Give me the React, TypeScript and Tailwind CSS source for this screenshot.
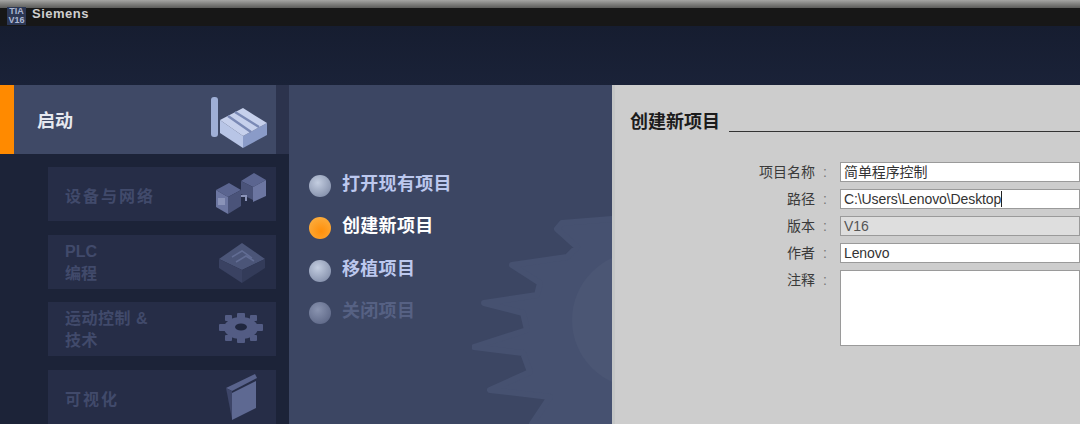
const CJK = '"Liberation Sans", "Noto Sans CJK SC", sans-serif';

function FactoryIcon() {
  return (
    <svg width="60" height="54" viewBox="0 0 60 54" className="shrink-0">
      <rect x="1" y="1" width="7" height="40" rx="3" fill="#9fafd6" />
      <path d="M10 24 L33 40 V52 L10 37 Z" fill="#b8c5e6" />
      <path d="M33 40 L57 27 V39 L33 52 Z" fill="#8a9bc8" />
      <path d="M10 24 L33 12 L57 27 L33 40 Z" fill="#c6d0ec" />
      <path d="M18 20 L41 36 M25 16 L49 31" stroke="#7a89b5" strokeWidth="2.5" />
    </svg>
  );
}

function DevicesIcon() {
  return (
    <svg width="54" height="44" viewBox="0 0 54 44" className="shrink-0">
      <path d="M2 18 L15 11 L27 18 L14 25 Z" fill="#5b6590" />
      <path d="M2 18 L14 25 V42 L2 35 Z" fill="#6c76a1" />
      <path d="M14 25 L27 18 V34 L14 42 Z" fill="#4a5379" />
      <rect x="4" y="26" width="7" height="7" fill="#8a93b8" />
      <path d="M27 9 L40 1 L52 8 L39 15 Z" fill="#5b6590" />
      <path d="M27 9 L39 15 V28 L27 22 Z" fill="#4a5379" />
      <path d="M39 15 L52 8 V24 L39 30 Z" fill="#6c76a1" />
      <path d="M27 24 L32 24 V29" stroke="#8a93b8" strokeWidth="2" fill="none" />
    </svg>
  );
}

function PlcIcon() {
  return (
    <svg width="48" height="42" viewBox="0 0 48 42" className="shrink-0">
      <path d="M1 17 L24 1 L47 17 L24 28 Z" fill="#4b5578" />
      <path d="M1 17 L24 28 V41 L1 26 Z" fill="#3a4262" />
      <path d="M24 28 L47 17 V26 L24 41 Z" fill="#333b59" />
      <path d="M14 15 L24 9 L34 16 M18 20 L28 14 L36 19" stroke="#626d94" strokeWidth="1.5" fill="none" />
    </svg>
  );
}

function GearIcon() {
  return (
    <svg width="44" height="32" viewBox="0 0 44 32" className="shrink-0">
      <g fill="#535c84">
        <ellipse cx="22" cy="15" rx="17" ry="11" />
        <rect x="18" y="0" width="8" height="6" rx="1" />
        <rect x="18" y="24" width="8" height="6" rx="1" />
        <rect x="0" y="11" width="7" height="7" rx="1" />
        <rect x="37" y="11" width="7" height="7" rx="1" />
        <rect x="6" y="2" width="7" height="6" rx="1" />
        <rect x="31" y="2" width="7" height="6" rx="1" />
        <rect x="6" y="22" width="7" height="6" rx="1" />
        <rect x="31" y="22" width="7" height="6" rx="1" />
      </g>
      <ellipse cx="22" cy="14" rx="6" ry="3.5" fill="#20273f" />
    </svg>
  );
}

function PanelIcon() {
  return (
    <svg width="34" height="48" viewBox="0 0 34 48" className="shrink-0">
      <path d="M1 15 L30 1 L32 5 L7 18 Z" fill="#59638c" />
      <path d="M1 15 L7 18 V46 L7 46 Z" fill="#3d4568" />
      <path d="M7 20 L31 8 V35 L7 47 Z" fill="#5e6992" />
    </svg>
  );
}

function Tile({ children, icon, iconClass, textClass }: { children: React.ReactNode; icon: React.ReactNode; iconClass: string; textClass?: string }) {
  return (
    <div className="flex h-[54px] shrink-0 items-center justify-between bg-[#262d47] pl-[17px]">
      <div className={`text-[16px] leading-[22px] font-bold text-[#414a6b] ${textClass ?? ""}`}>{children}</div>
      <div className={iconClass}>{icon}</div>
    </div>
  );
}

function MenuItem({ label, dot, text }: { label: string; dot: string; text: string }) {
  return (
    <div className="flex h-[22px] items-center gap-[11px]">
      <span className={`mt-[3px] h-[22px] w-[22px] rounded-full ${dot}`} />
      <span className={`text-[18px] font-bold tracking-[0.3px] ${text}`}>{label}</span>
    </div>
  );
}

function Field({ label, children, className }: { label: string; children?: React.ReactNode; className: string }) {
  return (
    <div className="flex items-start">
      <div className="w-[197px] shrink-0 text-right text-[14px] leading-[20px] text-[#3a3a3a]">
        {label}
        <span className="ml-[8px] text-[#777]">:</span>
      </div>
      <div className={`ml-[13px] flex-1 border border-[#9a9a9a] px-[3px] text-[14px] tracking-[-0.1px] text-[#333] ${className}`}>{children}</div>
    </div>
  );
}

export default function App() {
  return (
    <div className="flex h-[424px] w-[1080px] flex-col overflow-hidden bg-[#1b233a]" style={{ fontFamily: CJK }}>
      <div className="flex h-[26px] shrink-0 flex-col">
        <div className="h-[8px] bg-gradient-to-b from-[#a5a5a3] to-[#5c5c5a]" />
        <div className="flex h-[18px] items-start bg-[#171717]">
          <div className="ml-[7px] -mt-[1px] flex h-[18px] w-[19px] flex-col items-center bg-[#2c3754] text-[9px] leading-[9px] font-bold text-[#aab6d2]">
            <span>TIA</span>
            <span>V16</span>
          </div>
          <span className="ml-[6px] -mt-[1px] text-[13px] leading-[14px] font-bold tracking-[0.5px] text-[#cfcfcf]">Siemens</span>
        </div>
      </div>
      <div className="h-[59px] shrink-0 bg-gradient-to-b from-[#161d30] to-[#1a2238]" />
      <div className="flex min-h-0 flex-1">
        <div className="flex w-[289px] shrink-0 flex-col">
          <div className="flex h-[69px] shrink-0 bg-[#2c334d]">
            <div className="w-[14px] bg-[#ff8a00]" />
            <div className="flex w-[262px] items-center justify-between bg-[#3f4966] pl-[23px]">
              <span className="pt-[4px] text-[18px] font-bold text-[#e6e8ef]">启动</span>
              <div className="mr-[6px] mt-[6px]">
                <FactoryIcon />
              </div>
            </div>
          </div>
          <div className="flex min-h-0 flex-1 flex-col gap-[13.5px] bg-[#1c2338] pt-[13px] pr-[13px] pl-[48px]">
            <Tile icon={<DevicesIcon />} iconClass="mr-[8px]" textClass="pt-[6px] tracking-[2px]">
              设备与网络
            </Tile>
            <Tile icon={<PlcIcon />} iconClass="mr-[10px] mt-[2px]" textClass="pt-[2px] leading-[21px]">
              PLC
              <br />
              编程
            </Tile>
            <Tile icon={<GearIcon />} iconClass="mr-[13px]" textClass="pt-[2px] tracking-[0.5px]">
              运动控制 &amp;
              <br />
              技术
            </Tile>
            <Tile icon={<PanelIcon />} iconClass="mr-[17px]" textClass="pt-[6px] tracking-[2px]">
              可视化
            </Tile>
          </div>
        </div>
        <div className="relative flex w-[323px] shrink-0 flex-col overflow-hidden bg-[#3c4663] pt-[88px] pl-[20px]">
          <svg width="150" height="270" viewBox="0 0 150 270" className="absolute top-[72px] left-[183px]">
            <path
              d="M140 62 L90 66 L85 72 L105 90 L95 100 L40 108 L68 126 L65 138 L12 146 L51 156 L55 173 L2 190 L51 196 L58 215 L18 233 L78 240 L60 267 L150 267 L150 62 Z"
              fill="#465170"
              stroke="#465170"
              strokeWidth="6"
              strokeLinejoin="round"
            />
            <circle cx="168" cy="163" r="68" fill="#4b5674" />
          </svg>
          <div className="relative flex flex-col gap-[20.5px]">
            <MenuItem label="打开现有项目" dot="bg-[radial-gradient(circle_at_40%_35%,#c3cde0,#76829f)]" text="text-[#bcc8ee]" />
            <MenuItem label="创建新项目" dot="bg-[radial-gradient(circle_at_55%_65%,#ff8f0a,#fbb44a)]" text="text-white" />
            <MenuItem label="移植项目" dot="bg-[radial-gradient(circle_at_40%_35%,#c3cde0,#76829f)]" text="text-[#bcc8ee]" />
            <MenuItem label="关闭项目" dot="bg-[radial-gradient(circle_at_40%_35%,#8a94b0,#545e7e)]" text="text-[#566183]" />
          </div>
        </div>
        <div className="min-w-0 flex-1 border-l-[3px] border-[#c4c6c6] bg-[#cdcdcd] pt-[25px] pl-[15px]">
          <div className="flex items-end">
            <span className="text-[18px] leading-[24px] font-bold text-[#1c1c1c]">创建新项目</span>
            <div className="mb-[2px] ml-[9px] h-[1px] flex-1 bg-[#333]" />
          </div>
          <div className="mt-[28px] flex flex-col gap-[7px]">
            <Field label="项目名称" className="h-[20px] bg-white leading-[18px]">
              简单程序控制
            </Field>
            <Field label="路径" className="h-[20px] bg-white leading-[18px]">
              C:\Users\Lenovo\Desktop
              <span className="border-l border-[#222]" />
            </Field>
            <Field label="版本" className="h-[20px] bg-[#dedede] leading-[18px] text-[#555]">
              V16
            </Field>
            <Field label="作者" className="h-[20px] bg-white leading-[18px]">
              Lenovo
            </Field>
            <Field label="注释" className="h-[76px] border-[#8a9cb4] bg-white" />
          </div>
        </div>
      </div>
    </div>
  );
}
